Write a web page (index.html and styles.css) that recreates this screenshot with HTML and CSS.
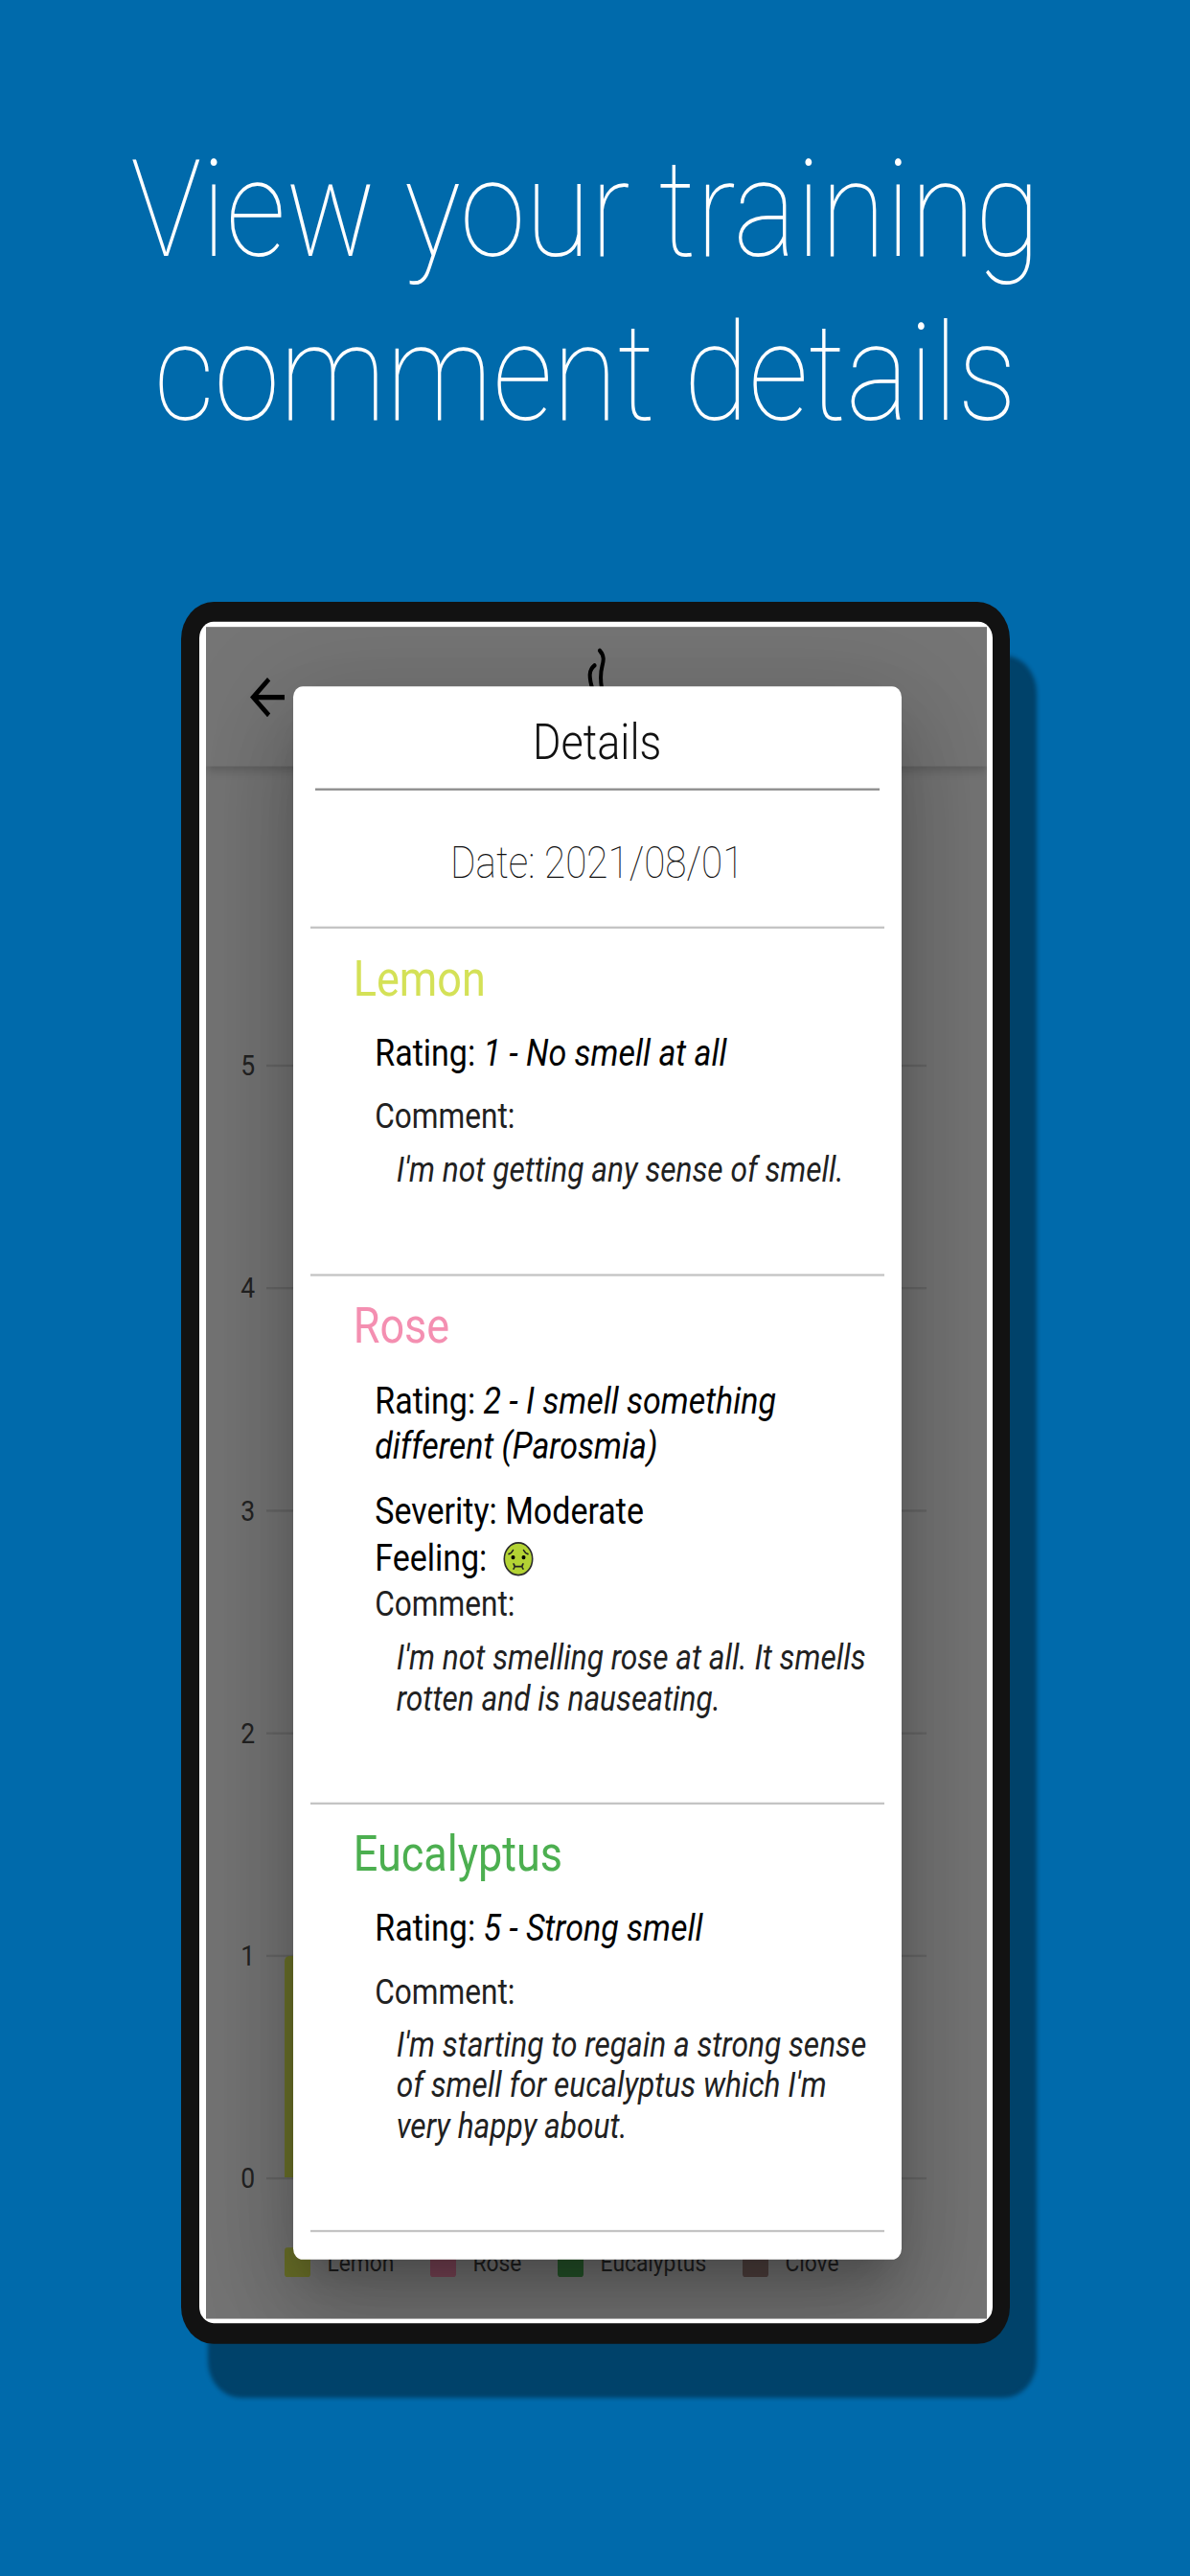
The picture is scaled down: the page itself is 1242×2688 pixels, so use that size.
FILE: index.html
```html
<!DOCTYPE html>
<html lang="en">
<head>
<meta charset="utf-8">
<title>Training comment details</title>
<link rel="stylesheet" href="styles.css">
</head>
<body>
<main class="poster">
  <h1 class="headline">View your training<br>comment details</h1>
  <div class="device">
    <div class="bezel">
    <div class="screen">
      <header class="appbar">
        <svg class="back" viewBox="0 0 24 24"><path d="M20 11H7.83l5.59-5.59L12 4l-8 8 8 8 1.41-1.41L7.83 13H20v-2z"/></svg>
        <svg class="steam" viewBox="0 0 24 40"><path d="M8.500 16C3 20 2 25 6.500 38M14 2.500c5 5 4 9 2.500 14s-2 12-.5 20"/></svg>
      </header>
      <section class="chart">
        <div class="tick"><span>5</span><i></i></div>
        <div class="tick"><span>4</span><i></i></div>
        <div class="tick"><span>3</span><i></i></div>
        <div class="tick"><span>2</span><i></i></div>
        <div class="tick"><span>1</span><i></i><b class="bar"></b></div>
        <div class="tick"><span>0</span><i></i></div>
      </section>
      <ul class="legend">
        <li><i class="sw lemon-bg"></i>Lemon</li>
        <li><i class="sw rose-bg"></i>Rose</li>
        <li><i class="sw eucalyptus-bg"></i>Eucalyptus</li>
        <li><i class="sw clove-bg"></i>Clove</li>
      </ul>
      <div class="dialog">
        <h2 class="title">Details</h2>
        <p class="date">Date: 2021/08/01</p>
        <article class="entry">
          <h3 class="lemon">Lemon</h3>
          <p class="rating">Rating: <em>1 - No smell at all</em></p>
          <p class="label">Comment:</p>
          <p class="comment">I'm not getting any sense of smell.</p>
        </article>
        <article class="entry">
          <h3 class="rose">Rose</h3>
          <p class="rating">Rating: <em>2 - I smell something<br>different (Parosmia)</em></p>
          <div class="facts">
            <p>Severity: Moderate</p>
            <p class="feeling">Feeling:
              <svg class="face" viewBox="0 0 32 32"><circle cx="16" cy="16" r="14.700" fill="#b3d334" stroke="#2b2b2b" stroke-width="1.600"/><g fill="none" stroke="#222" stroke-width="1.500" stroke-linecap="round"><path d="M6 11.500c2-.5 3.500-1.700 4.500-3.500M26 11.500c-2-.5-3.500-1.700-4.500-3.500M11 20.500c1.200 1.300 1.200 3.300 0 4.600M21 20.500c-1.200 1.300-1.200 3.300 0 4.600M12 22.800h8"/></g><ellipse cx="10.500" cy="14.500" rx="2" ry="1.900"/><ellipse cx="21.500" cy="14.500" rx="2" ry="1.900"/></svg>
            </p>
          </div>
          <p class="label">Comment:</p>
          <p class="comment">I'm not smelling rose at all. It smells<br>rotten and is nauseating.</p>
        </article>
        <article class="entry">
          <h3 class="eucalyptus">Eucalyptus</h3>
          <p class="rating">Rating: <em>5 - Strong smell</em></p>
          <p class="label">Comment:</p>
          <p class="comment">I'm starting to regain a strong sense<br>of smell for eucalyptus which I'm<br>very happy about.</p>
        </article>
      </div>
    </div>
    </div>
  </div>
</main>
</body>
</html>
```
FILE: styles.css
```css
* { box-sizing: border-box; margin: 0; padding: 0; }
html, body { background: #006aab; height: 2688px; overflow: hidden; }
body { font-family: Roboto, sans-serif; }

/* The artwork is laid out at its natural proportions and stretched to the tall canvas. */
.poster {
  width: 1242px;
  height: 2349.65px;
  transform: scaleY(1.144);
  transform-origin: 0 0;
  background: #006aab;
  overflow: hidden;
}
.headline {
  height: 548.7px;
  padding-top: 115.500px;
  padding-right: 20px;
  color: #fff;
  font-size: 124px;
  font-weight: 100;
  line-height: 150px;
  text-align: center;
  white-space: nowrap;
}
.device {
  width: 864.700px;
  height: 1589.400px;
  margin-left: 189.300px;
  padding: 18.600px 18.400px;
  border-radius: 34px;
  background: #121212;
  box-shadow: 28px 49px 4px rgba(0, 20, 30, .46);
}
.bezel {
  height: 1552.200px;
  padding: 4.500px 5.500px 4.500px 7.500px;
  border-radius: 15px;
  background: #fff;
  overflow: hidden;
}
.screen {
  position: relative;
  height: 1543.200px;
  background: #747474;
  overflow: hidden;
}
.appbar {
  display: flex;
  align-items: center;
  height: 127.600px;
  padding-left: 37px;
  background: #757575;
  box-shadow: 0 4px 10px rgba(0, 0, 0, .22);
}
.back { width: 54px; height: 54px; }
.steam {
  width: 24px;
  height: 40px;
  margin: -50px 0 0 305.500px;
  fill: none;
  stroke: #000;
  stroke-width: 4;
  stroke-linecap: round;
}
.chart { padding-top: 171.400px; }
.tick {
  position: relative;
  display: flex;
  align-items: center;
  height: 202.900px;
  padding-left: 36px;
  color: #222;
  font-size: 26.500px;
}
.tick span { width: 27.300px; line-height: 30px; }
.tick i { width: 688.400px; height: 2.300px; background: #666; }
.bar {
  position: absolute;
  left: 81.700px;
  top: 102px;
  width: 40px;
  height: 202.500px;
  border-radius: 5px 5px 0 0;
  background: #6b7129;
}
.legend {
  display: flex;
  gap: 37.700px;
  margin-top: -38px;
  padding-left: 81.700px;
  color: #1f1f1f;
  font-size: 22.800px;
  line-height: 30.500px;
  list-style: none;
}
.legend li { display: flex; gap: 17.500px; }
.sw { width: 27px; height: 27px; border-radius: 3px; }
.lemon-bg { background: #6b7129; }
.rose-bg { background: #7d4658; }
.eucalyptus-bg { background: #26562a; }
.clove-bg { background: #514240; }

.dialog {
  position: absolute;
  left: 90.500px;
  top: 54px;
  width: 635px;
  height: 1435px;
  border-radius: 10px;
  background: #fff;
  color: #000;
  box-shadow:
    0 25px 34px -16px rgba(0, 0, 0, .2),
    0 54px 86px 7px rgba(0, 0, 0, .14),
    0 20px 104px 18px rgba(0, 0, 0, .12);
}
.title {
  height: 95.600px;
  margin: 0 23px;
  padding-top: 21.700px;
  border-bottom: 2.200px solid #8c8c8c;
  color: #111;
  font-size: 45px;
  font-weight: 300;
  line-height: 60px;
  text-align: center;
}
.date {
  height: 126px;
  margin: 0 18px;
  padding-top: 40.200px;
  border-bottom: 2.400px solid #c4c4c4;
  color: #111;
  font-size: 40.500px;
  font-weight: 100;
  line-height: 50px;
  text-align: center;
}
.entry {
  margin: 0 18px;
  padding: 15.700px 0 75.500px 67.500px;
  border-bottom: 2.400px solid #c4c4c4;
  white-space: nowrap;
}
.entry h3 { margin-left: -22.500px; font-size: 45px; font-weight: 400; line-height: 60px; }
.lemon { color: #d4e157; }
.rose { color: #f48fb1; }
.eucalyptus { color: #4caf50; }
.rating { margin-top: 17px; font-size: 34px; line-height: 41.400px; }
.facts { margin-top: 17.300px; margin-bottom: -17.600px; font-size: 34px; line-height: 43.600px; }
.feeling { display: flex; align-items: center; gap: 17px; height: 43.600px; }
.face { width: 32px; height: 32px; }
.label { margin-top: 20px; color: #212121; font-size: 31.600px; line-height: 36.700px; }
.comment { margin: 11.700px 0 0 22.500px; color: #212121; font-size: 31.700px; font-style: italic; line-height: 36.700px; }
```
